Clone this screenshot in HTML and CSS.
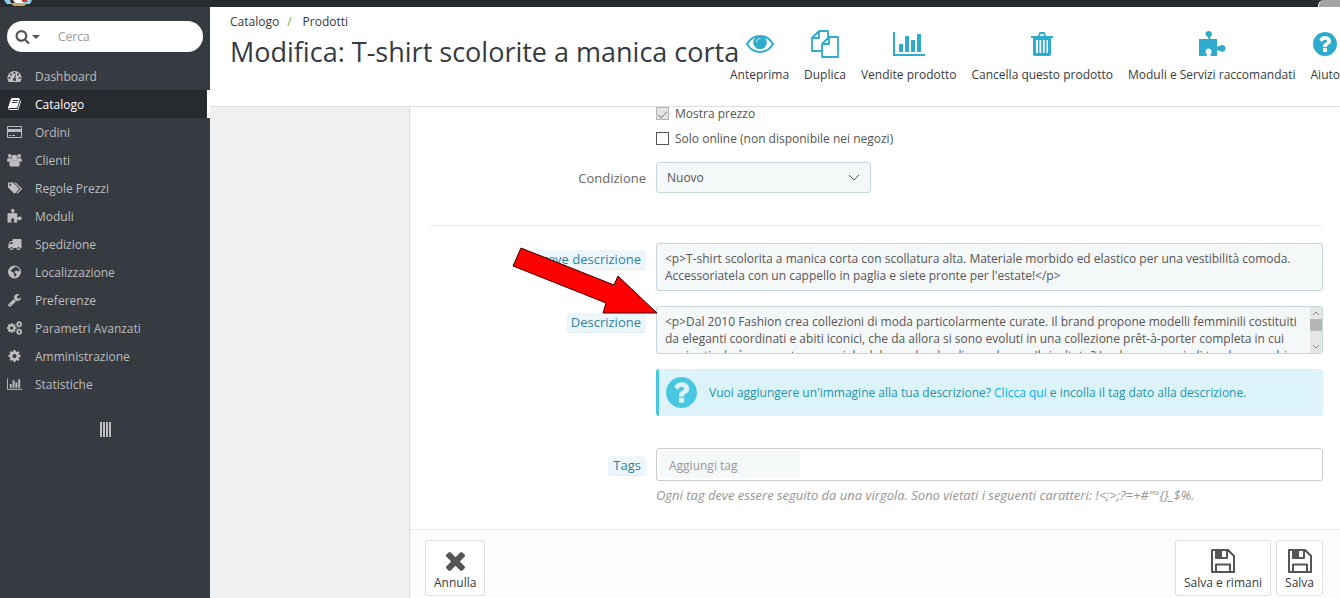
FILE: index.html
```html
<!DOCTYPE html>
<html lang="it">
<head>
    <meta charset="UTF-8">
    <meta name="viewport" content="width=device-width, initial-scale=1.0">
    <title>Modifica: T-shirt scolorite a manica corta</title>
    <link rel="stylesheet" href="styles.css">
</head>
<body>
    <!-- icone -->
    <svg class="sprite" aria-hidden="true">
        <symbol id="i-search" viewBox="0 0 1792 1792"><path d="M1216 832q0-185-131.500-316.500t-316.500-131.500-316.500 131.500-131.500 316.500 131.500 316.500 316.500 131.500 316.500-131.500 131.500-316.500zm512 832q0 52-38 90t-90 38q-54 0-90-38l-343-342q-179 124-399 124-143 0-273.500-55.500t-225-150-150-225-55.500-273.500 55.500-273.500 150-225 225-150 273.500-55.500 273.500 55.500 225 150 150 225 55.500 273.500q0 220-124 399l343 343q37 37 37 90z"/></symbol>
        <symbol id="i-dashboard" viewBox="0 0 1792 1792"><path d="M384 1152q0-53-37.500-90.500t-90.500-37.500-90.500 37.500-37.500 90.500 37.500 90.500 90.500 37.500 90.500-37.500 37.500-90.500zm192-448q0-53-37.500-90.500t-90.500-37.500-90.500 37.500-37.500 90.500 37.500 90.500 90.500 37.500 90.500-37.500 37.500-90.500zm428 481l101-382q6-26-7.500-48.500t-38.500-29.500-48 6.500-30 39.500l-101 382q-60 5-107 43.500t-63 98.500q-20 77 20 146t117 89 146-20 89-117q16-60-6-117t-72-91zm660-33q0-53-37.500-90.500t-90.500-37.500-90.500 37.500-37.500 90.500 37.500 90.500 90.500 37.500 90.500-37.500 37.500-90.500zm-640-640q0-53-37.500-90.500t-90.500-37.500-90.500 37.500-37.500 90.500 37.500 90.500 90.500 37.500 90.500-37.500 37.500-90.500zm448 192q0-53-37.500-90.500t-90.500-37.500-90.500 37.500-37.500 90.500 37.500 90.500 90.500 37.500 90.500-37.500 37.500-90.500zm320 448q0 261-141 483-19 29-54 29h-1402q-35 0-54-29-141-221-141-483 0-182 71-348t191-286 286-191 348-71 348 71 286 191 191 286 71 348z"/></symbol>
        <symbol id="i-book" viewBox="0 0 1792 1792"><path d="M1703 478q40 57 18 129l-275 906q-19 64-76.500 107.500t-122.500 43.500h-923q-77 0-148.500-53.500t-99.500-131.500q-24-67-2-127 0-4 3-27t4-37q1-8-3-21.500t-3-19.500q2-11 8-21t16.500-23.500 16.500-23.500q23-38 45-91.500t30-91.500q3-10 .5-30t-.5-28q3-11 17-28t17-23q21-36 42-92t25-90q1-9-2.500-32t.5-28q4-13 22-30.500t22-22.500q19-26 42.500-84.500t27.500-96.500q1-8-3-25.500t-2-26.500q2-8 9-18t18-23 17-21q8-12 16.500-30.500t15-35 16-36 19.500-32 26.500-23.500 36-11.500 47.500 5.500l-1 3q38-9 51-9h761q74 0 114 56t18 130l-274 906q-36 119-71.500 153.500t-128.500 34.500h-869q-27 0-38 15-11 16-1 43 24 70 144 70h923q29 0 56-15.500t35-41.500l300-987q7-22 5-57 38 15 59 43zm-1064 2q-4 13 2 22.500t20 9.500h608q13 0 25.500-9.500t16.500-22.500l21-64q4-13-2-22.500t-20-9.500h-608q-13 0-25.500 9.500t-16.500 22.500zm-83 256q-4 13 2 22.500t20 9.500h608q13 0 25.500-9.500t16.500-22.500l21-64q4-13-2-22.500t-20-9.500h-608q-13 0-25.500 9.500t-16.500 22.500z"/></symbol>
        <symbol id="i-card" viewBox="0 0 15 14"><path fill-rule="evenodd" d="M1 1h13a1 1 0 0 1 1 1v10a1 1 0 0 1-1 1H1a1 1 0 0 1-1-1V2a1 1 0 0 1 1-1zM1 2v2h13V2zM1 7v5h13V7zM2 10h2v1H2zM5 10h3v1H5z"/></symbol>
        <symbol id="i-users" viewBox="0 0 16 14"><circle cx="3" cy="2.500" r="2"/><circle cx="13" cy="2.500" r="2"/><circle cx="8" cy="4.500" r="3"/><path d="M1.500 5h4v3.800h-4C.5 8.800 0 8.300 0 7.500 0 6 .5 5 1.500 5zM14.500 5h-4v3.800h4c1 0 1.500-.5 1.500-1.300C16 6 15.500 5 14.500 5z"/><path d="M5 7.300h6c2 0 2.500 2.200 2.500 4.500 0 1.400-.8 2.200-2 2.200h-7c-1.200 0-2-.8-2-2.200 0-2.300.5-4.500 2.500-4.500z"/></symbol>
        <symbol id="i-tags" viewBox="0 0 2048 1792"><path d="M576 448q0-53-37.500-90.500t-90.500-37.500-90.500 37.500-37.500 90.500 37.500 90.500 90.500 37.500 90.500-37.500 37.500-90.500zm1067 576q0 53-37 90l-491 492q-39 37-91 37-53 0-90-37l-715-716q-38-37-64.500-101t-26.500-117v-416q0-52 38-90t90-38h416q53 0 117 26.500t102 64.500l715 714q37 39 37 91zm384 0q0 53-37 90l-491 492q-39 37-91 37-36 0-59-14t-53-45l470-470q37-37 37-90 0-52-37-91l-715-714q-38-38-102-64.500t-117-26.500h224q53 0 117 26.500t102 64.500l715 714q37 39 37 91z"/></symbol>
        <symbol id="i-puzzle" viewBox="0 0 28 26"><path d="M1 8h8.500c1 0 1.100-.8.600-1.500C9.400 5.600 7.500 4.700 7.500 3c0-1.800 1.400-3 3.200-3S14 1.200 14 3c0 1.700-1.200 2.500-1.700 3.500-.4.800 0 1.500 1 1.500H19v6.500c0 1 .8 1.300 1.600.9 1-.5 1.800-1.400 3.600-1.400 2 0 3.300 1.400 3.300 3.400s-1.300 3.400-3.300 3.400c-1.700 0-2.500-1-3.600-1.500-.8-.4-1.600 0-1.600 1V25h-5.500c-1.200 0-1.500-.8-1-1.700.4-.8 1.100-1.500 1.100-2.900 0-1.800-1.400-3-3-3s-3 1.200-3 3c0 1.400.8 2.100 1.200 2.900.4.900 0 1.700-1.200 1.700H1z"/></symbol>
        <symbol id="i-truck" viewBox="0 0 1792 1792"><path d="M640 1408q0-52-38-90t-90-38-90 38-38 90 38 90 90 38 90-38 38-90zm-384-512h384v-256h-158q-13 0-22 9l-195 195q-9 9-9 22v30zm1280 512q0-52-38-90t-90-38-90 38-38 90 38 90 90 38 90-38 38-90zm256-1088v1024q0 15-4 26.500t-13.500 18.500-16.500 11.500-23.500 6-22.500 2-25.500 0-22.500-.5q0 106-75 181t-181 75-181-75-75-181h-384q0 106-75 181t-181 75-181-75-75-181h-64q-3 0-22.500.5t-25.500 0-22.500-2-23.500-6-16.500-11.500-13.500-18.500-4-26.500q0-26 19-45t45-19v-320q0-8-.5-35t0-38 2.500-34.500 6.500-37 14-30.500 22.500-30l198-198q19-19 50.500-32t58.500-13h160v-192q0-26 19-45t45-19h1024q26 0 45 19t19 45z"/></symbol>
        <symbol id="i-globe" viewBox="0 0 14 14"><path fill-rule="evenodd" d="M7 .5a6.500 6.500 0 1 1 0 13 6.500 6.500 0 0 1 0-13zM8 1.500l3 1.500 1.300 3-1.800.5-1.500-1-1.500.5-.5 1.500 1.500 1 .5 1.500-1.500 2-1.300-2.500.3-1.500-2-1L3 5.500 5 4z"/></symbol>
        <symbol id="i-wrench" viewBox="0 0 1792 1792"><path d="M448 1472q0-26-19-45t-45-19-45 19-19 45 19 45 45 19 45-19 19-45zm644-420l-682 682q-37 37-90 37-52 0-91-37l-106-108q-38-36-38-90 0-53 38-91l681-681q39 98 114.500 173.500t173.500 114.500zm634-435q0 39-23 106-47 134-164.500 217.500t-258.500 83.500q-185 0-316.500-131.500t-131.500-316.500 131.500-316.500 316.500-131.500q58 0 121.500 16.500t107.500 46.500q16 11 16 28t-16 28l-293 169v224l193 107q5-3 79-48.500t135.500-81 70.500-35.500q15 0 23.500 10t8.500 25z"/></symbol>
        <symbol id="i-cog" viewBox="0 0 1792 1792"><path d="M1152 896q0-106-75-181t-181-75-181 75-75 181 75 181 181 75 181-75 75-181zm512-109v222q0 12-8 23t-20 13l-185 28q-19 54-39 91 35 50 107 138 10 12 10 25t-9 23q-27 37-99 108t-94 71q-12 0-26-9l-138-108q-44 23-91 38-16 136-29 186-7 28-36 28h-222q-14 0-24.500-8.500t-11.500-21.500l-28-184q-49-16-90-37l-141 107q-10 9-25 9-14 0-25-11-126-114-165-168-7-10-7-23 0-12 8-23 15-21 51-66.500t54-70.500q-27-50-41-99l-183-27q-13-2-21-12.500t-8-23.500v-222q0-12 8-23t19-13l186-28q14-46 39-92-40-57-107-138-10-12-10-24 0-10 9-23 26-36 98.500-107.500t94.500-71.500q13 0 26 10l138 107q44-23 91-38 16-136 29-186 7-28 36-28h222q14 0 24.500 8.500t11.500 21.500l28 184q49 16 90 37l142-107q9-9 24-9 13 0 25 10 129 119 165 170 7 8 7 22 0 12-8 23-15 21-51 66.500t-54 70.500q26 50 41 98l183 28q13 2 21 12.500t8 23.500z"/></symbol>
        <symbol id="i-cogs" viewBox="0 0 16 14"><use href="#i-cog" x="-1" y="1" width="12" height="12"/><use href="#i-cog" x="9" y="-1" width="8" height="8"/><use href="#i-cog" x="9" y="7" width="8" height="8"/></symbol>
        <symbol id="i-chart" viewBox="0 0 32 24"><path d="M0 0h2v22h30v2H0zM6 12h4v8H6zM12 4h4v16h-4zM18 8h4v12h-4zM24 2h4v18h-4z"/></symbol>
        <symbol id="i-eye" viewBox="0 0 28 18"><path fill="none" stroke="currentColor" stroke-width="2" d="M1 9C4 4 8.500 1 14 1s10 3 13 8c-3 5-7.500 8-13 8S4 14 1 9z"/><circle cx="14" cy="7.500" r="6.800"/><path fill="none" stroke="#fff" stroke-width=".8" stroke-linecap="round" d="M10.500 7C10.500 5 12 3.500 14 3.500"/></symbol>
        <symbol id="i-copy" viewBox="0 0 28 28"><path fill="none" stroke="currentColor" stroke-width="1.800" stroke-linejoin="round" d="M11 21H1V8l7-7h9v6M8 1v7H1M18 7h9v20H11V14zM18 7v7h-7M17 1.500V7"/></symbol>
        <symbol id="i-trash" viewBox="0 0 22 24"><path fill-rule="evenodd" d="M7 4l1-3c.2-.6.600-1 1.500-1h3c.9 0 1.300.4 1.500 1l1 3h7v2h-2v16c0 1.200-.8 2-2 2H4c-1.200 0-2-.8-2-2V6H0V4zM9 4h4l-.6-2H9.600zM5 8v13h2V8zM8.500 8v13h1.700V8zM12 8v13h1.700V8zM15.500 8v13H17V8z"/></symbol>
        <symbol id="i-help" viewBox="128 128 1536 1536"><path d="M1024 1376v-192q0-14-9-23t-23-9h-192q-14 0-23 9t-9 23v192q0 14 9 23t23 9h192q14 0 23-9t9-23zm256-672q0-88-55.500-163t-138.500-116-170-41q-243 0-371 213-15 24 8 42l132 100q7 6 19 6 16 0 25-12 53-68 86-92 34-24 86-24 48 0 85.500 26t37.500 59q0 38-20 61t-68 45q-63 28-115.500 86.500t-52.500 125.500v36q0 14 9 23t23 9h192q14 0 23-9t9-23q0-19 21.500-49.500t54.500-49.500q32-18 49-28.500t46-35 44.500-48 28-60.500 12.500-81zm384 192q0 209-103 385.500t-279.500 279.500-385.500 103-385.500-103-279.500-279.500-103-385.500 103-385.500 279.500-279.500 385.500-103 385.500 103 279.500 279.500 103 385.500z"/></symbol>
        <symbol id="i-times" viewBox="302 366 1188 1188"><path d="M1490 1322q0 40-28 68l-136 136q-28 28-68 28t-68-28l-294-294-294 294q-28 28-68 28t-68-28l-136-136q-28-28-28-68t28-68l294-294-294-294q-28-28-28-68t28-68l136-136q28-28 68-28t68 28l294 294 294-294q28-28 68-28t68 28l136 136q28 28 28 68t-28 68l-294 294 294 294q28 28 28 68z"/></symbol>
        <symbol id="i-save" viewBox="0 0 24 24"><path fill="none" stroke="currentColor" stroke-width="2" stroke-linejoin="round" d="M1 1h16l6 6v16H1zM5 23v-7.500h14V23M5 1v8h11V1"/><path d="M5 1h6v8H5z"/></symbol>
    </svg>

    <header class="topbar">
        <svg class="logo" viewBox="0 0 30 7" aria-hidden="true">
            <path fill="#8fd0e6" d="M1 0h28l-2 4H4z"/>
            <path fill="#fff" d="M9 0h12v3H9z"/>
            <path fill="#c0392b" d="M19 0h5v2h-5z"/>
            <path fill="#3a2c22" d="M7 0h3l2 3H8z"/>
            <path fill="#c9a86a" d="M7 3h18l-4 3H11z"/>
        </svg>
        <span class="topbar-tab"></span>
    </header>

    <div class="layout">
        <nav class="sidebar">
            <form class="search">
                <button type="button" class="search-btn" aria-label="Cerca in">
                    <svg class="search-icon"><use href="#i-search"/></svg>
                    <span class="caret"></span>
                </button>
                <input type="text" class="search-input" placeholder="Cerca" aria-label="Cerca">
            </form>
            <ul class="menu">
                <li><a href="#"><svg><use href="#i-dashboard"/></svg>Dashboard</a></li>
                <li class="active"><a href="#"><svg><use href="#i-book"/></svg>Catalogo</a></li>
                <li><a href="#"><svg><use href="#i-card"/></svg>Ordini</a></li>
                <li><a href="#"><svg><use href="#i-users"/></svg>Clienti</a></li>
                <li><a href="#"><svg><use href="#i-tags"/></svg>Regole Prezzi</a></li>
                <li><a href="#"><svg><use href="#i-puzzle"/></svg>Moduli</a></li>
                <li><a href="#"><svg><use href="#i-truck"/></svg>Spedizione</a></li>
                <li><a href="#"><svg><use href="#i-globe"/></svg>Localizzazione</a></li>
                <li><a href="#"><svg><use href="#i-wrench"/></svg>Preferenze</a></li>
                <li><a href="#"><svg><use href="#i-cogs"/></svg>Parametri Avanzati</a></li>
                <li><a href="#"><svg><use href="#i-cog"/></svg>Amministrazione</a></li>
                <li><a href="#"><svg><use href="#i-chart"/></svg>Statistiche</a></li>
            </ul>
            <button type="button" class="collapse" aria-label="Riduci menu"></button>
        </nav>

        <main class="main">
            <div class="page-head">
                <div class="page-heading">
                    <ul class="breadcrumb">
                        <li><a href="#">Catalogo</a></li>
                        <li><a href="#">Prodotti</a></li>
                    </ul>
                    <h1>Modifica: T-shirt scolorite a manica corta</h1>
                </div>
                <div class="toolbar">
                    <a href="#"><svg class="eye"><use href="#i-eye"/></svg>Anteprima</a>
                    <a href="#"><svg><use href="#i-copy"/></svg>Duplica</a>
                    <a href="#"><svg class="chart"><use href="#i-chart"/></svg>Vendite prodotto</a>
                    <a href="#"><svg class="small"><use href="#i-trash"/></svg>Cancella questo prodotto</a>
                    <a href="#"><svg><use href="#i-puzzle"/></svg>Moduli e Servizi raccomandati</a>
                    <a href="#"><svg class="small"><use href="#i-help"/></svg>Aiuto</a>
                </div>
            </div>

            <div class="content">
                <form class="panel">
                    <div class="panel-body">
                        <div class="form-row">
                            <div class="field checks">
                                <label><input type="checkbox" checked disabled>Mostra prezzo</label>
                                <label><input type="checkbox">Solo online (non disponibile nei negozi)</label>
                            </div>
                        </div>
                        <div class="form-row">
                            <label class="form-label" for="condition">Condizione</label>
                            <div class="field select-wrap">
                                <select id="condition">
                                    <option>Nuovo</option>
                                    <option>Usato</option>
                                </select>
                                <svg viewBox="0 0 12 8" aria-hidden="true"><path d="M1 1l5 5 5-5"/></svg>
                            </div>
                        </div>
                        <hr>
                        <div class="form-row">
                            <label class="form-label" for="short"><span class="tip">Breve descrizione</span></label>
                            <div class="field">
                                <textarea id="short" spellcheck="false">&lt;p&gt;T-shirt scolorita a manica corta con scollatura alta. Materiale morbido ed elastico per una vestibilità comoda. Accessoriatela con un cappello in paglia e siete pronte per l'estate!&lt;/p&gt;</textarea>
                            </div>
                        </div>
                        <div class="form-row">
                            <label class="form-label" for="description"><span class="tip">Descrizione</span></label>
                            <div class="field scroll-field">
                                <textarea id="description" spellcheck="false">&lt;p&gt;Dal 2010 Fashion crea collezioni di moda particolarmente curate. Il brand propone modelli femminili costituiti da eleganti coordinati e abiti iconici, che da allora si sono evoluti in una collezione prêt-à-porter completa in cui ogni articolo è una parte essenziale del guardaroba di una donna. Il risultato? Look senza pari, di tendenza e chic.&lt;/p&gt;</textarea>
                                <div class="scrollbar" aria-hidden="true">
                                    <svg viewBox="0 0 12 12"><path d="M3 8l3-3 3 3"/></svg>
                                    <span></span>
                                    <svg viewBox="0 0 12 12"><path d="M3 4l3 3 3-3"/></svg>
                                </div>
                            </div>
                            <svg class="arrow" viewBox="0 0 146 68" aria-hidden="true"><path d="M9 2l93 37 4-9 39 37H91l3-10L1 20z"/></svg>
                        </div>
                        <div class="form-row">
                            <div class="field hint">
                                <svg><use href="#i-help"/></svg>
                                <p>Vuoi aggiungere un'immagine alla tua descrizione? <a href="#">Clicca qui</a> e incolla il tag dato alla descrizione.</p>
                            </div>
                        </div>
                        <div class="form-row tags-row">
                            <label class="form-label" for="tags"><span class="tip">Tags</span></label>
                            <div class="field">
                                <div class="tag-box">
                                    <input type="text" id="tags" placeholder="Aggiungi tag">
                                </div>
                                <p class="help">Ogni tag deve essere seguito da una virgola. Sono vietati i seguenti caratteri: !&lt;;&gt;;?=+#"°{}_$%.</p>
                            </div>
                        </div>
                    </div>
                    <div class="panel-footer">
                        <button type="button"><svg class="times"><use href="#i-times"/></svg>Annulla</button>
                        <button type="submit" class="push"><svg><use href="#i-save"/></svg>Salva e rimani</button>
                        <button type="submit"><svg><use href="#i-save"/></svg>Salva</button>
                    </div>
                </form>
            </div>
        </main>
    </div>
</body>
</html>
```

FILE: styles.css
```css
* {
    margin: 0;
    padding: 0;
    box-sizing: border-box;
}

body {
    background: #eff0f2;
    color: #555;
    font-family: "Open Sans", "Liberation Sans", sans-serif;
    font-size: 12px;
    line-height: 17px;
    min-height: 100vh;
    display: flex;
    flex-direction: column;
    overflow: hidden;
}

a {
    color: inherit;
    text-decoration: none;
}

ul {
    list-style: none;
}

svg {
    fill: currentColor;
    display: block;
    flex: none;
}

button,
input,
select,
textarea {
    font: inherit;
    color: inherit;
    outline: none;
}

.sprite {
    position: absolute;
    width: 0;
    height: 0;
}

/* barra superiore */
.topbar {
    display: flex;
    justify-content: space-between;
    height: 7px;
    background: #282b30;
}

.logo {
    width: 30px;
    height: 7px;
    margin-left: 3px;
}

.topbar-tab {
    width: 22px;
    background: #a3a3a3;
    border-left: 1px solid #fff;
    border-top-left-radius: 6px;
}

.layout {
    flex: 1;
    display: flex;
}

/* menu laterale */
.sidebar {
    flex: none;
    width: 210px;
    padding-top: 14px;
    background: #363a41;
    color: #bebebe;
}

.search {
    display: flex;
    align-items: center;
    height: 31px;
    margin: 0 7px 10px;
    padding: 0 9px 0 8px;
    background: #fff;
    border-radius: 16px;
}

.search-btn {
    display: flex;
    align-items: center;
    gap: 2px;
    width: 43px;
    background: none;
    border: none;
    color: #555;
}

.search-icon {
    width: 15px;
    height: 15px;
}

.caret {
    border: 4px solid transparent;
    border-top-color: #555;
    border-bottom: none;
}

.search-input {
    flex: 1;
    min-width: 0;
    border: none;
    background: none;
}

::placeholder {
    color: #999;
    opacity: 1;
}

.menu a {
    display: flex;
    align-items: center;
    gap: 13px;
    height: 28px;
    padding-left: 7px;
}

.menu svg {
    width: 15px;
    height: 14px;
}

.menu .active a {
    color: #fff;
    background: #282b30;
    border-right: 3px solid #fff;
}

.collapse {
    display: block;
    width: 11px;
    height: 15px;
    margin: 24px auto 0;
    border: none;
    background: repeating-linear-gradient(90deg, #bebebe 0 2px, transparent 2px 3px);
}

/* intestazione pagina */
.main {
    flex: 1;
    min-width: 0;
    display: flex;
    flex-direction: column;
}

.page-head {
    display: flex;
    justify-content: space-between;
    height: 100px;
    padding-left: 20px;
    background: #fff;
    border-bottom: 1px solid #ddd;
    color: #363a41;
    white-space: nowrap;
}

.page-heading {
    flex: 1;
    min-width: 0;
    padding-top: 6px;
}

.breadcrumb {
    display: flex;
}

.breadcrumb li + li::before {
    content: "/";
    padding: 0 11px 0 8px;
    color: #72b32d;
}

h1 {
    margin-top: 4px;
    font-size: 27px;
    font-weight: 400;
    line-height: 36px;
}

.toolbar {
    flex: none;
    display: flex;
    gap: 15px;
    padding-top: 22px;
}

.toolbar a {
    display: grid;
    grid-template-rows: 30px 17px;
    gap: 7px;
    align-items: center;
    justify-items: center;
}

.toolbar svg {
    width: 28px;
    height: 28px;
    color: #2eacce;
}

.toolbar .eye {
    height: 18px;
}

.toolbar .chart {
    width: 32px;
    height: 24px;
}

.toolbar .small {
    width: 24px;
    height: 24px;
}

/* pannello */
.content {
    flex: 1;
    display: flex;
    padding-left: 199px;
}

.panel {
    flex: 1;
    min-width: 0;
    background: #fff;
    border-left: 1px solid #ddd;
}

.panel-body {
    display: flex;
    flex-direction: column;
    gap: 15px;
    padding: 0 17px 24px 20px;
}

.form-row {
    position: relative;
    display: grid;
    grid-template-columns: 226px 1fr;
}

.field {
    grid-column: 2;
}

.form-label {
    padding: 7px 10px 0 0;
    text-align: right;
    font-size: 13px;
    line-height: 19px;
    color: #666;
}

.tip {
    display: inline-block;
    padding: 0 5px;
    background: #edf7fb;
    border-bottom: 1px solid #dfeef5;
    border-radius: 3px;
    color: #2d7fa5;
}

.checks label {
    display: flex;
    align-items: center;
    gap: 6px;
    height: 25px;
}

.checks {
    margin-top: -6px;
    margin-bottom: -4px;
}

.checks input {
    appearance: none;
    width: 13px;
    height: 13px;
    border: 1px solid #555;
    background: #fff;
}

.checks input:checked {
    display: grid;
    place-items: center;
    border-color: #b5b5b5;
    background: #e4e4e4;
}

.checks input:checked::before {
    content: "";
    width: 8px;
    height: 4px;
    border: solid #888;
    border-width: 0 0 1px 1px;
    transform: rotate(-45deg);
}

.select-wrap {
    position: relative;
    width: 215px;
}

select {
    appearance: none;
    width: 100%;
    height: 31px;
    padding: 0 10px;
    border: 1px solid #c7d6db;
    border-radius: 3px;
    background: #f5f8f9;
}

.select-wrap svg {
    position: absolute;
    top: 12px;
    right: 11px;
    width: 12px;
    height: 8px;
    fill: none;
    stroke: #555;
}

hr {
    margin: 17px 0 2px;
    border: none;
    border-top: 1px solid #eaedef;
}

textarea {
    display: block;
    width: 100%;
    height: 48px;
    padding: 6px 8px;
    border: 1px solid #c7d6db;
    border-radius: 3px;
    background: #f5f8f9;
    resize: none;
    overflow: hidden;
}

.scroll-field {
    position: relative;
}

.scroll-field textarea {
    padding-right: 22px;
}

.scrollbar {
    position: absolute;
    top: 1px;
    right: 1px;
    bottom: 1px;
    width: 12px;
    background: #e6e6e6;
    display: flex;
    flex-direction: column;
}

.scrollbar svg {
    width: 12px;
    height: 12px;
    fill: none;
    stroke: #888;
}

.scrollbar span {
    height: 12px;
    margin-bottom: auto;
    background: #b5b5b5;
}

.arrow {
    position: absolute;
    top: -60px;
    left: 82px;
    width: 146px;
    height: 68px;
    fill: #f00;
    stroke: #3a0000;
}

.hint {
    display: flex;
    align-items: center;
    gap: 12px;
    height: 47px;
    padding-left: 7px;
    border-left: 3px solid #4ac7e0;
    border-radius: 3px;
    background: #dcf3f9;
    color: #1e94ab;
}

.hint svg {
    width: 31px;
    height: 31px;
    color: #4ac7e0;
}

.hint a {
    color: #00aff0;
}

.tags-row {
    margin-top: 17px;
}

.tags-row .form-label {
    padding-top: 8px;
}

.tag-box {
    height: 33px;
    padding: 2px 3px;
    border: 1px solid #ccc;
    border-radius: 3px;
}

.tag-box input {
    width: 140px;
    height: 27px;
    padding: 2px 9px 0;
    border: none;
    background: #f5f8f9;
}

.help {
    margin-top: 6px;
    margin-bottom: 1px;
    font-size: 13px;
    color: #959595;
    font-style: italic;
}

.panel-footer {
    display: flex;
    gap: 5px;
    padding: 10px 17px 2px 15px;
    border-top: 1px solid #eaedef;
    background: #fcfdfe;
}

.panel-footer button {
    display: grid;
    grid-template-rows: 26px 17px;
    justify-items: center;
    align-items: center;
    height: 56px;
    padding: 7px 8px 2px;
    border: 1px solid #ddd;
    border-radius: 3px;
    background: #fff;
    color: #363a41;
}

.panel-footer svg {
    width: 24px;
    height: 24px;
    color: #555;
}

.panel-footer .times {
    width: 19px;
    height: 19px;
}

.panel-footer .push {
    margin-left: auto;
}
```
